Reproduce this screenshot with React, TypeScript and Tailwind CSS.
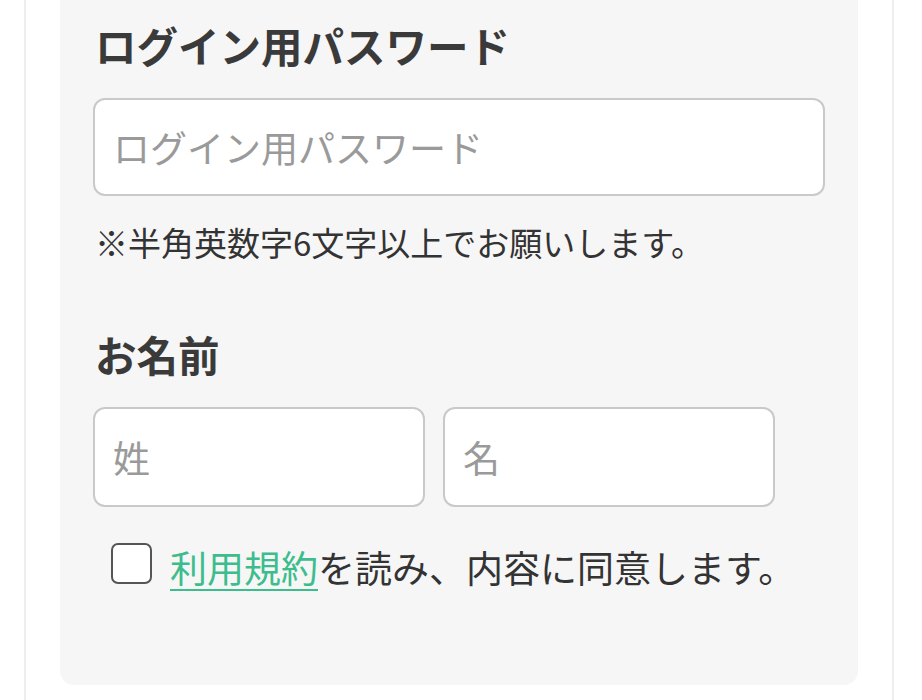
import React, { FC } from 'react';

const fontStack = "font-['Noto_Sans_CJK_JP','Noto_Sans',sans-serif]";

const inputClass =
  'rounded-[12px] border-2 border-[#c9c9c9] bg-white px-[18px] text-[37px] text-[#333333] placeholder:text-[#9a9a9a] focus:outline-none';

const App: FC = () => {
  return (
    <div className={`min-h-[700px] bg-white ${fontStack}`}>
      <div className="ml-[24px] mr-[28px] min-h-[700px] border-x-2 border-[#eeeeee] px-[34px] pb-[16px]">
        <form className="rounded-b-[14px] bg-[#f6f6f6] px-[33px] pb-[91px] pt-[15px]">
          <label htmlFor="password" className="block pl-[2px] text-[41.5px] font-bold leading-[60px] text-[#3a3a3a]">
            ログイン用パスワード
          </label>
          <input
            id="password"
            type="password"
            placeholder="ログイン用パスワード"
            className={`mt-[23px] h-[98px] w-full ${inputClass}`}
          />
          <p className="mt-[22px] pl-[2px] text-[33px] leading-[48px] text-[#333333]">
            ※半角英数字6文字以上でお願いします。
          </p>

          <label htmlFor="lastname" className="mt-[58px] block pl-[2px] text-[41.5px] font-bold leading-[60px] text-[#3a3a3a]">
            お名前
          </label>
          <div className="mt-[23px] flex gap-[18px]">
            <input id="lastname" type="text" placeholder="姓" className={`h-[100px] w-[332px] min-w-0 ${inputClass}`} />
            <input id="firstname" type="text" placeholder="名" className={`h-[100px] w-[332px] min-w-0 ${inputClass}`} />
          </div>

          <label htmlFor="agree" className="mt-[36px] flex items-start pl-[18px]">
            <input
              id="agree"
              type="checkbox"
              className="h-[41px] w-[41px] shrink-0 appearance-none rounded-[7px] border-2 border-[#555555] bg-white"
            />
            <span className="ml-[18px] -mt-[3px] text-[37px] leading-[54px] text-[#333333]">
              <a href="#" className="text-[#3dbd8d] underline decoration-2 underline-offset-[6px]">
                利用規約
              </a>
              を読み、内容に同意します。
            </span>
          </label>
        </form>
      </div>
    </div>
  );
};

export default App;
